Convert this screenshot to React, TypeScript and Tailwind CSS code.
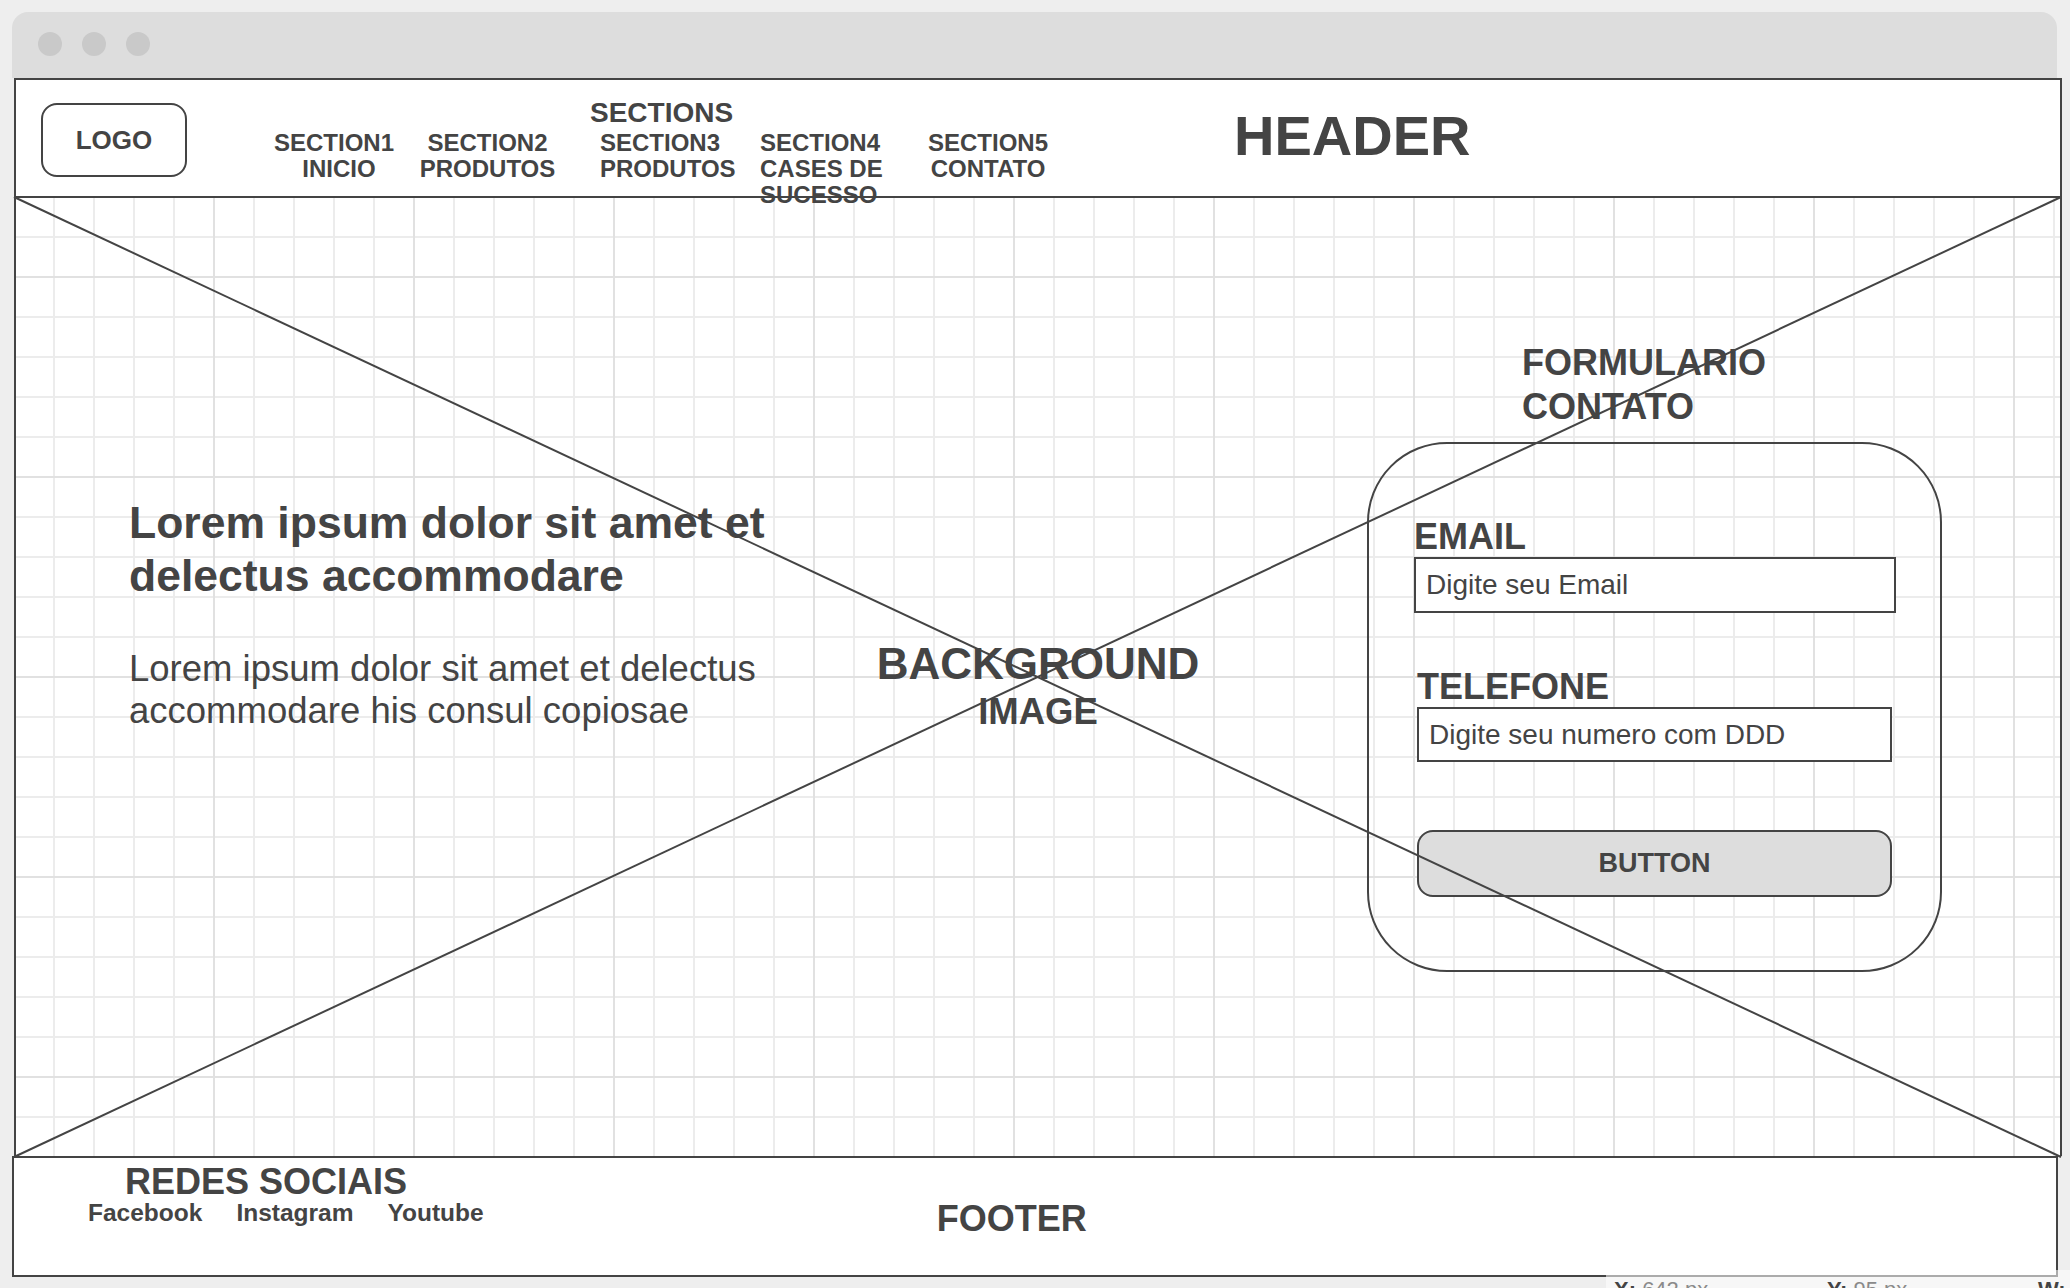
import React from "react";

const INK = "#444444";

function Dot() {
  return <div className="w-[24px] h-[24px] rounded-full bg-[#c9c9c9]" />;
}

export default function App() {
  const W = 2044;
  const H = 958;
  const vlines: { x: number; major: boolean }[] = [];
  for (let x = 54; x <= 2054; x += 40) vlines.push({ x: x - 16, major: (x - 14) % 200 === 0 });
  const hlines: { y: number; major: boolean }[] = [];
  for (let y = 237; y <= 1117; y += 40) hlines.push({ y: y - 198, major: (y - 277) % 200 === 0 });

  return (
    <div className="relative w-[2070px] h-[1288px] overflow-hidden bg-[#eeeeee] pt-[12px] font-['Liberation_Sans',Arial,sans-serif] text-[#444444]">
      {/* title bar */}
      <div className="ml-[12px] w-[2045px] h-[66px] rounded-t-[16px] bg-[#dddddd] flex items-start gap-[20px] pl-[26px] pt-[20px]">
        <Dot />
        <Dot />
        <Dot />
      </div>

      {/* header */}
      <header className="relative z-10 ml-[14px] w-[2048px] h-[120px] border-2 border-[#444444] bg-white flex items-start font-bold whitespace-nowrap">
        <div className="ml-[25px] mt-[23px] w-[146px] h-[74px] border-2 border-[#444444] rounded-[16px] flex items-center justify-center text-[26px]">
          LOGO
        </div>
        <div className="ml-[85px] mt-[50px] w-[124px] text-center text-[24px] leading-[26px]">
          <div>SECTION1</div>
          <div className="pl-[10px]">INICIO</div>
        </div>
        <div className="ml-[23px] mt-[50px] w-[137px] text-center text-[24px] leading-[26px]">
          SECTION2
          <br />
          PRODUTOS
        </div>
        <div className="ml-[34px] mt-[16px] w-[145px]">
          <div className="text-[28px] leading-[34px]">SECTIONS</div>
          <div className="pl-[10px] text-[24px] leading-[26px]">
            SECTION3
            <br />
            PRODUTOS
          </div>
        </div>
        <div className="ml-[25px] mt-[50px] w-[124px] text-left text-[24px] leading-[26px]">
          SECTION4
          <br />
          CASES DE
          <br />
          SUCESSO
        </div>
        <div className="ml-[44px] mt-[50px] w-[120px] text-center text-[24px] leading-[26px]">
          SECTION5
          <br />
          CONTATO
        </div>
        <div className="ml-[186px] mt-[24px] text-[56px] leading-[64px]">HEADER</div>
      </header>

      {/* main / background image area */}
      <main className="relative ml-[14px] w-[2048px] h-[958px] border-x-2 border-[#444444] bg-white flex items-start">
        <svg className="absolute left-0 top-0" width={W} height={H}>
          {vlines
            .filter((l) => !l.major)
            .map((l) => (
              <line key={"v" + l.x} x1={l.x} y1={0} x2={l.x} y2={H} stroke="#ececec" strokeWidth={2} />
            ))}
          {hlines
            .filter((l) => !l.major)
            .map((l) => (
              <line key={"h" + l.y} x1={0} y1={l.y} x2={W} y2={l.y} stroke="#ececec" strokeWidth={2} />
            ))}
          {vlines
            .filter((l) => l.major)
            .map((l) => (
              <line key={"V" + l.x} x1={l.x} y1={0} x2={l.x} y2={H} stroke="#e1e1e1" strokeWidth={2} />
            ))}
          {hlines
            .filter((l) => l.major)
            .map((l) => (
              <line key={"H" + l.y} x1={0} y1={l.y} x2={W} y2={l.y} stroke="#e1e1e1" strokeWidth={2} />
            ))}
        </svg>

        <div className="relative ml-[113px] mt-[298px] w-[660px]">
          <div className="text-[44.5px] font-bold leading-[53px]">
            Lorem ipsum dolor sit amet et delectus accommodare
          </div>
          <div className="mt-[46px] text-[36.5px] leading-[42px]">
            Lorem ipsum dolor sit amet et delectus accommodare his consul copiosae
          </div>
        </div>

        <div className="relative w-[498px] mt-[442px] text-center font-bold whitespace-nowrap">
          <div className="text-[44px] leading-[48px]">BACKGROUND</div>
          <div className="text-[36.5px] leading-[47px]">IMAGE</div>
        </div>

        <div className="relative ml-[80px] mt-[143px] whitespace-nowrap">
          <div className="ml-[155px] text-[36px] font-bold leading-[44px]">
            FORMULARIO
            <br />
            CONTATO
          </div>
          <div className="mt-[13px] w-[575px] h-[530px] rounded-[80px] border-2 border-[#444444] pl-[45px] pt-[73px]">
            <div className="text-[36px] font-bold leading-[40px]">EMAIL</div>
            <div className="w-[482px] h-[56px] border-2 border-[#444444] bg-white flex items-center pl-[10px] text-[28px]">
              Digite seu Email
            </div>
            <div className="mt-[54px] ml-[3px] text-[36px] font-bold leading-[40px]">TELEFONE</div>
            <div className="ml-[3px] w-[475px] h-[55px] border-2 border-[#444444] bg-white flex items-center pl-[10px] text-[28px]">
              Digite seu numero com DDD
            </div>
            <div className="mt-[68px] ml-[3px] w-[475px] h-[67px] rounded-[16px] border-2 border-[#444444] bg-[#dddddd] flex items-center justify-center text-[27px] font-bold">
              BUTTON
            </div>
          </div>
        </div>

        <svg className="absolute left-0 top-0 pointer-events-none overflow-visible" width={W} height={H}>
          <line x1={-2} y1={-1} x2={W + 1} y2={H + 1} stroke={INK} strokeWidth={2} />
          <line x1={-2} y1={H + 1} x2={W + 1} y2={-1} stroke={INK} strokeWidth={2} />
        </svg>
      </main>

      {/* footer */}
      <footer className="ml-[12px] w-[2046px] h-[121px] border-2 border-[#444444] bg-white flex items-start font-bold whitespace-nowrap">
        <div className="ml-[74px] mt-[6px]">
          <div className="ml-[37px] text-[36px] leading-[36px]">REDES SOCIAIS</div>
          <div className="flex gap-[34px] text-[24.5px] leading-[26px]">
            <span>Facebook</span>
            <span>Instagram</span>
            <span>Youtube</span>
          </div>
        </div>
        <div className="ml-[453px] mt-[41px] text-[36px] leading-[40px]">FOOTER</div>
      </footer>

      {/* coordinates overlay */}
      <div className="absolute left-[1606px] top-[1270px] w-[464px] h-[18px] bg-white/55">
        <div className="absolute left-[8px] top-[9px] text-[22px] leading-[22px] whitespace-nowrap">
          <span className="font-bold">X:</span> <span className="text-[#8a8a8a]">642 px</span>
        </div>
        <div className="absolute left-[221px] top-[9px] text-[22px] leading-[22px] whitespace-nowrap">
          <span className="font-bold">Y:</span> <span className="text-[#8a8a8a]">95 px</span>
        </div>
        <div className="absolute left-[432px] top-[9px] text-[22px] leading-[22px] whitespace-nowrap font-bold">
          W:
        </div>
      </div>
    </div>
  );
}
